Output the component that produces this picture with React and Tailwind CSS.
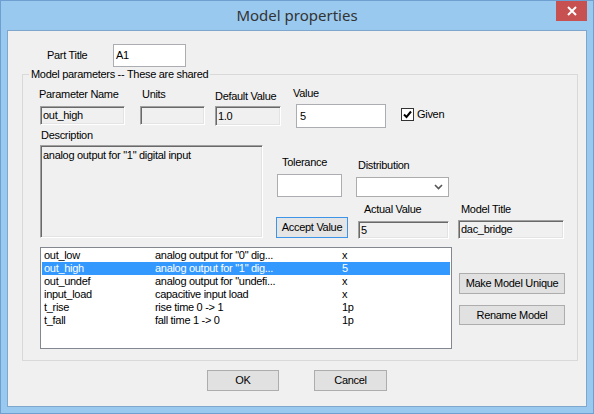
import React from "react";

const sunken =
  "bg-[#f0f0f0] border border-t-[#a0a0a0] border-l-[#a0a0a0] border-r-white border-b-white shadow-[inset_1px_1px_0_#696969,inset_-1px_-1px_0_#e3e3e3] flex items-center pl-[2px]";
const btn =
  "bg-[#e1e1e1] border border-[#adadad] flex items-center justify-center";

const rows = [
  ["out_low", 'analog output for "0" dig...', "x"],
  ["out_high", 'analog output for "1" dig...', "5"],
  ["out_undef", 'analog output for "undefi...', "x"],
  ["input_load", "capacitive input load", "x"],
  ["t_rise", "rise time 0 -> 1", "1p"],
  ["t_fall", "fall time 1 -> 0", "1p"],
];

export default function App() {
  return (
    <div className="relative w-[594px] h-[414px] bg-[#99c9ef] border border-[#6f9fd0] font-['Liberation_Sans',Arial,sans-serif] text-[11px] leading-[13px] tracking-[-0.3px] text-black overflow-hidden">
      <div className="h-[29px] flex items-center justify-center font-['Noto_Sans',sans-serif] text-[15px] tracking-normal text-[#333]">
        Model properties
      </div>
      <div className="absolute top-0 right-[6px] w-[31px] h-[20px] bg-[#c75050] flex items-center justify-center">
        <svg width="10" height="10" viewBox="0 0 10 10">
          <path d="M1 1 L9 9 M9 1 L1 9" stroke="white" strokeWidth="2" />
        </svg>
      </div>

      <div className="mx-[6px] h-[377px] border border-[#7fa6cc] bg-[#f0f0f0]">
        {/* Part title */}
        <div className="flex items-center mt-[13px] ml-[39px]">
          <span className="w-[66px]">Part Title</span>
          <div className="w-[73px] h-[23px] bg-white border border-[#abadb3] flex items-center pl-[2px]">
            A1
          </div>
        </div>

        <fieldset className="ml-[14px] w-[556px] border border-[#d9d9d9] pb-[11px]">
          <legend className="ml-[6px] px-[2px] leading-[14px]">
            Model parameters -- These are shared
          </legend>

          {/* Row 1 */}
          <div className="flex items-start">
            <div className="ml-[16px] mt-[7px] flex flex-col">
              <span>Parameter Name</span>
              <div className={`${sunken} ml-[1px] mt-[5px] w-[85px] h-[19px]`}>out_high</div>
            </div>
            <div className="ml-[15px] mt-[7px] flex flex-col">
              <span className="pl-[2px]">Units</span>
              <div className={`${sunken} mt-[5px] w-[65px] h-[19px]`}></div>
            </div>
            <div className="ml-[10px] mt-[9px] flex flex-col">
              <span>Default Value</span>
              <div className={`${sunken} mt-[3px] w-[66px] h-[20px]`}>1.0</div>
            </div>
            <div className="ml-[12px] mt-[6px] flex flex-col">
              <span>Value</span>
              <div className="ml-[3px] mt-[4px] w-[90px] h-[24px] bg-white border border-[#abadb3] flex items-center pl-[3px]">
                5
              </div>
            </div>
            <div className="ml-[15px] mt-[27px] flex items-center gap-[3px]">
              <div className="w-[13px] h-[13px] bg-white border border-[#333] flex items-center justify-center">
                <svg width="11" height="11" viewBox="0 0 11 11">
                  <path d="M2 5.5 L4.5 8 L9 2.5" stroke="black" strokeWidth="2" fill="none" />
                </svg>
              </div>
              <span>Given</span>
            </div>
          </div>

          {/* Row 2 */}
          <div className="flex items-start">
            <div className="ml-[17px] mt-[1px] flex flex-col">
              <span className="pl-[1px]">Description</span>
              <div className={`${sunken} mt-[3px] w-[223px] h-[93px] !items-start pt-[3px]`}>
                analog output for "1" digital input
              </div>
            </div>
            <div className="ml-[13px] mt-[28px] flex flex-col">
              <span className="pl-[6px]">Tolerance</span>
              <div className="ml-[1px] mt-[5px] w-[65px] h-[23px] bg-white border border-[#abadb3]"></div>
              <div className="mt-[20px] w-[72px] h-[21px] bg-[#e5e5e5] border border-[#3d95ea] flex items-center justify-center">
                Accept Value
              </div>
            </div>
            <div className="ml-[8px] mt-[31px] flex flex-col">
              <span className="pl-[2px]">Distribution</span>
              <div className="mt-[5px] w-[93px] h-[20px] bg-white border border-[#acacac] flex items-center justify-end pr-[5px]">
                <svg width="9" height="6" viewBox="0 0 9 6">
                  <path d="M1 1 L4.5 4.5 L8 1" stroke="#555" strokeWidth="1.6" fill="none" />
                </svg>
              </div>
              <span className="mt-[6px] pl-[8px]">Actual Value</span>
              <div className={`${sunken} ml-[2px] mt-[5px] w-[91px] h-[18px]`}>5</div>
            </div>
            <div className="ml-[9px] mt-[75px] flex flex-col">
              <span className="pl-[3px]">Model Title</span>
              <div className={`${sunken} mt-[4px] w-[106px] h-[19px]`}>dac_bridge</div>
            </div>
          </div>

          {/* Row 3 */}
          <div className="flex items-start">
            <div className="ml-[17px] mt-[8px] w-[412px] h-[102px] bg-white border border-[#828790] pt-[1px]">
              {rows.map((r, i) => (
                <div
                  key={r[0]}
                  className={
                    i === 1
                      ? "mx-[1px] h-[13px] flex bg-[#3399ff] text-white pl-[2px]"
                      : "mx-[1px] h-[13px] flex pl-[2px]"
                  }
                >
                  <span className="w-[111px]">{r[0]}</span>
                  <span className="w-[187px]">{r[1]}</span>
                  <span>{r[2]}</span>
                </div>
              ))}
            </div>
            <div className="ml-[7px] mt-[34px] flex flex-col">
              <div className={`${btn} w-[106px] h-[21px]`}>Make Model Unique</div>
              <div className={`${btn} mt-[11px] w-[106px] h-[20px]`}>Rename Model</div>
            </div>
          </div>
        </fieldset>

        <div className="flex mt-[9px]">
          <div className={`${btn} ml-[199px] w-[72px] h-[21px]`}>OK</div>
          <div className={`${btn} ml-[35px] w-[73px] h-[21px]`}>Cancel</div>
        </div>
      </div>
    </div>
  );
}
